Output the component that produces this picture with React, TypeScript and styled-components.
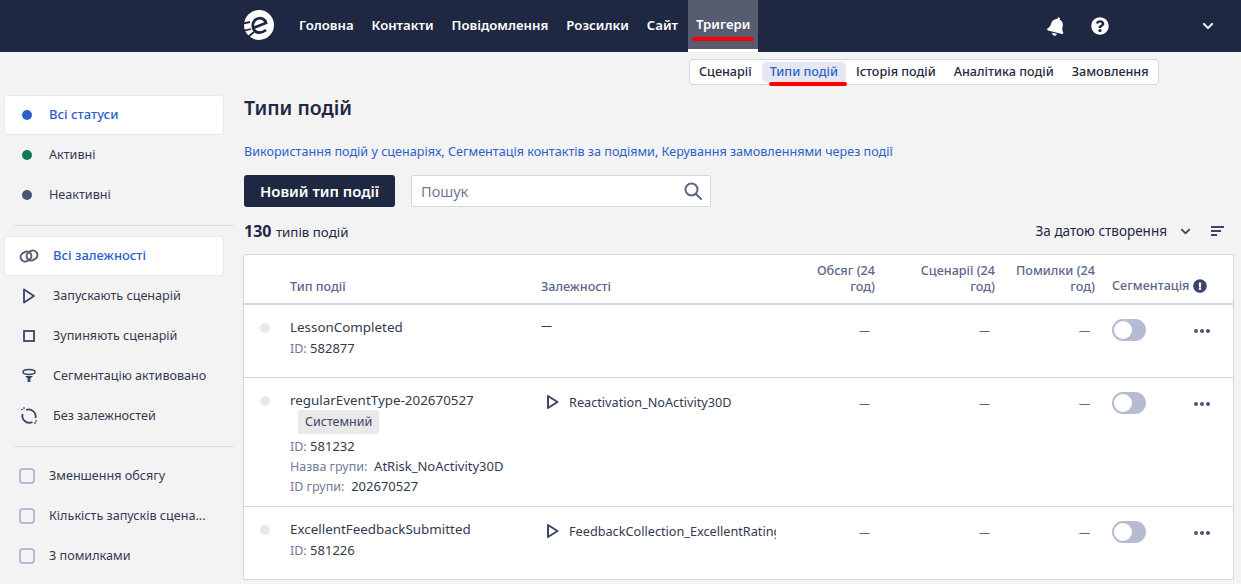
import React from 'react';
import styled, { createGlobalStyle } from 'styled-components';
import { FaBell, FaQuestionCircle, FaExclamationCircle, FaChevronDown } from 'react-icons/fa';

const GlobalStyle = createGlobalStyle`
  html, body {
    margin: 0;
    padding: 0;
    height: 584px;
    overflow: hidden;
    background: #f3f3f3;
    font-family: "Noto Sans", "Liberation Sans", sans-serif;
    color: #1f2842;
  }
  * { box-sizing: border-box; }
`;

const Header = styled.header`
  height: 52px;
  background: #1f2842;
  display: flex;
  align-items: stretch;
  padding-left: 243px;
`;

const Logo = styled.svg`
  width: 32px;
  height: 32px;
  margin-top: 9px;
  margin-right: 15px;
  flex: none;
`;

const TopNav = styled.nav`
  display: flex;
  align-items: stretch;
`;

const TopLink = styled.a<{ $active?: boolean }>`
  position: relative;
  display: flex;
  align-items: center;
  padding: 0 ${p => (p.$active ? 8 : 9)}px 2px;
  margin-left: ${p => (p.$active ? 1 : 0)}px;
  height: 52px;
  font-size: 13.2px;
  font-weight: 600;
  color: #fff;
  background: ${p => (p.$active ? '#575c70' : 'transparent')};
  border-bottom: ${p => (p.$active ? '3px solid #fff' : 'none')};
`;

const Redline = styled.span<{ $bottom: number; $left: number; $right: number }>`
  position: absolute;
  left: ${p => p.$left}px;
  right: ${p => p.$right}px;
  bottom: ${p => p.$bottom}px;
  height: 4px;
  border-radius: 2px;
  background: #fe0000;
`;

const HeaderIcons = styled.div`
  margin-left: auto;
  display: flex;
  align-items: center;
  color: #fff;
  padding-right: 27px;
`;

const IconSlot = styled.span<{ $w: number }>`
  display: flex;
  width: ${p => p.$w}px;
  align-items: center;
`;

const SubRow = styled.div`
  height: 26px;
  margin-top: 7px;
  padding-left: 689px;
`;

const SubNav = styled.div`
  display: inline-flex;
  align-items: center;
  gap: 2px;
  height: 26px;
  width: 470px;
  padding: 0 1px;
  background: #fff;
  border: 1px solid #d3d7e3;
  border-radius: 4px;
`;

const SubLink = styled.a<{ $active?: boolean }>`
  position: relative;
  display: flex;
  align-items: center;
  height: 20px;
  padding: 0 8px 1px;
  border-radius: 3px;
  font-size: 12.6px;
  font-weight: 500;
  white-space: nowrap;
  color: ${p => (p.$active ? '#2a62c9' : '#1f2842')};
  background: ${p => (p.$active ? '#e6e8f0' : 'transparent')};
`;

const Body = styled.div`
  display: flex;
  align-items: flex-start;
`;

const Sidebar = styled.aside`
  width: 243px;
  flex: none;
  padding: 10px 0 0 4px;
`;

const FilterItem = styled.div<{ $active?: boolean; $gap: number }>`
  width: 220px;
  height: 40px;
  display: flex;
  align-items: center;
  padding-left: 15px;
  gap: ${p => p.$gap}px;
  font-size: ${p => (p.$active ? 13 : 12.6)}px;
  white-space: nowrap;
  border-radius: 4px;
  color: ${p => (p.$active ? '#2a62c9' : '#333a50')};
  font-weight: ${p => (p.$active ? 500 : 400)};
  background: ${p => (p.$active ? '#fff' : 'transparent')};
  box-shadow: ${p => (p.$active ? 'inset 0 0 0 1px #e6e8f0' : 'none')};
`;

const FilterLabel = styled.span`
  margin-top: -2px;
`;

const Dot = styled.span<{ $color: string }>`
  width: 10px;
  height: 10px;
  margin-left: 3px;
  border-radius: 50%;
  background: ${p => p.$color};
  flex: none;
`;

const FilterIcon = styled.svg`
  width: 20px;
  height: 20px;
  flex: none;
`;

const Divider = styled.div<{ $after: number }>`
  width: 220px;
  height: 1px;
  margin: 10px 0 ${p => p.$after}px 10px;
  background: #dedfe5;
`;

const Check = styled.span`
  width: 16px;
  height: 16px;
  flex: none;
  border: 2px solid #b6bbd3;
  border-radius: 4px;
  background: #f3f3f3;
`;

const Main = styled.main`
  width: 991px;
  flex: none;
  padding-top: 9px;
`;

const Title = styled.h1`
  margin: 0;
  height: 27px;
  padding-left: 1px;
  font-size: 19.5px;
  line-height: 27px;
  font-weight: 600;
  color: #1f2842;
`;

const Links = styled.div`
  margin-top: 22px;
  padding-left: 1px;
  font-size: 12.6px;
  line-height: 18px;
  color: #2a62c9;
  white-space: nowrap;
`;

const Toolbar = styled.div`
  display: flex;
  gap: 16px;
  margin-top: 14px;
  padding-left: 1px;
`;

const PrimaryButton = styled.button`
  width: 151px;
  height: 32px;
  border: none;
  border-radius: 3px;
  background: #1f2842;
  color: #fff;
  font: 600 14.9px "Noto Sans", sans-serif;
`;

const Search = styled.div`
  width: 300px;
  height: 32px;
  display: flex;
  align-items: center;
  justify-content: space-between;
  padding: 0 7px 0 9px;
  background: #fff;
  border: 1px solid #d3d7e3;
  border-radius: 2px;
  font-size: 14.5px;
  color: #717a98;
`;

const CountRow = styled.div`
  display: flex;
  align-items: center;
  justify-content: space-between;
  height: 24px;
  margin-top: 12px;
  padding-left: 1px;
  font-size: 13.3px;
`;

const CountNumber = styled.b`
  font-size: 16px;
  font-weight: 700;
  margin-right: 1px;
`;

const SortBox = styled.div`
  display: flex;
  align-items: center;
  padding-right: 10px;
  color: #1f2842;
  font-size: 13.5px;
`;

const SortLabel = styled.span`
  margin-right: 13px;
`;

const SortChevron = styled.span`
  display: flex;
  color: #3b4568;
  margin-right: 20px;
`;

const Table = styled.div`
  margin-top: 11px;
  background: #fff;
  border: 1px solid #d3d7e3;
  border-bottom: none;
  border-radius: 4px 4px 0 0;
`;

const columns = '46px 251px 235px 99px 120px 100px 17px 1fr';

const HeaderRow = styled.div`
  display: grid;
  grid-template-columns: ${columns};
  height: 50px;
  border-bottom: 2px solid #d3d7e3;
  font-size: 12.6px;
  line-height: 16px;
  font-weight: 500;
  color: #5c658a;
`;

const HeadCell = styled.div<{ $right?: boolean; $col: number }>`
  grid-column: ${p => p.$col};
  align-self: end;
  padding-bottom: 8px;
  white-space: nowrap;
  text-align: ${p => (p.$right ? 'right' : 'left')};
`;

const SegHead = styled(HeadCell)`
  display: flex;
  align-items: center;
  gap: 4px;
  padding-bottom: 9px;
`;

const Row = styled.div<{ $h: number }>`
  display: grid;
  grid-template-columns: ${columns};
  height: ${p => p.$h}px;
  border-bottom: 1px solid #d3d7e3;
  font-size: 13px;
`;

const StatusDot = styled.span`
  width: 10px;
  height: 10px;
  margin: 18px 0 0 16px;
  border-radius: 50%;
  background: #e6e8ef;
`;

const NameCell = styled.div`
  padding-top: 12px;
  line-height: 20px;
`;

const EventName = styled.div`
  font-size: 13.4px;
  margin-bottom: 1px;
  color: #333a50;
`;

const Meta = styled.div`
  color: #333a50;
  white-space: nowrap;
`;

const MetaKey = styled.span`
  color: #717a98;
  font-size: 12.5px;
  line-height: 1;
`;

const Badge = styled.div`
  display: block;
  width: fit-content;
  margin: -1px 0 2px 8px;
  padding: 0 7px;
  height: 24px;
  font-size: 12.5px;
  line-height: 23px;
  border-radius: 2px;
  background: #e9e9ea;
  color: #3b4568;
`;

const DepCell = styled.div<{ $plain?: boolean }>`
  grid-column: 3;
  display: flex;
  align-items: flex-start;
  gap: 9px;
  padding-top: ${p => (p.$plain ? '11px' : '15px')};
  padding-left: ${p => (p.$plain ? '0' : '5px')};
  font-size: ${p => (p.$plain ? '11px' : '12.7px')};
  line-height: 18px;
  color: #333a50;
  overflow: hidden;
  white-space: nowrap;
`;

const Dash = styled.div`
  padding: 16px 5px 0 0;
  text-align: right;
  font-size: 11px;
  line-height: 18px;
  color: #5c658a;
`;

const ToggleCell = styled.div`
  grid-column: 8;
  display: flex;
  align-items: flex-start;
`;

const Toggle = styled.span`
  width: 34px;
  height: 22px;
  margin-top: 14px;
  padding: 2px;
  border-radius: 11px;
  background: #b6bbd3;
  flex: none;
`;

const Knob = styled.span`
  display: block;
  width: 18px;
  height: 18px;
  border-radius: 50%;
  background: #fff;
`;

const RowMenu = styled.span`
  display: flex;
  margin: 24px 0 0 48px;
`;

const Play = () => (
  <svg width="14" height="16" viewBox="0 0 14 16" fill="none" style={{ flex: 'none', marginTop: 1 }}>
    <path d="M2 2l9.5 6L2 14z" stroke="#3b4568" strokeWidth="2" strokeLinejoin="round" />
  </svg>
);

const Dots = () => (
  <svg width="16" height="4" viewBox="0 0 16 4" fill="#4a5478">
    <circle cx="2" cy="2" r="2" />
    <circle cx="8" cy="2" r="2" />
    <circle cx="14" cy="2" r="2" />
  </svg>
);

const events = [
  { name: 'LessonCompleted', id: '582877', h: 73, dep: '' },
  { name: 'regularEventType-202670527', id: '581232', h: 129, dep: 'Reactivation_NoActivity30D', group: 'AtRisk_NoActivity30D', groupId: '202670527' },
  { name: 'ExcellentFeedbackSubmitted', id: '581226', h: 73, dep: 'FeedbackCollection_ExcellentRating' },
];

export default function App() {
  return (
    <>
      <GlobalStyle />
      <Header>
        <Logo viewBox="0 0 32 32">
          <circle cx="16" cy="16" r="15" fill="#fff" />
          <path d="M11.5 18.5L23 14C22 10 18 8.5 15 9.5C10 11 9 16 10.5 20C12 24 18 25 23 21" fill="none" stroke="#1f2842" strokeWidth="2.8" />
          <path d="M0 14.5L7 13M0 22L8 20M5 28L11 23" stroke="#1f2842" strokeWidth="1.8" />
        </Logo>
        <TopNav>
          <TopLink>Головна</TopLink>
          <TopLink>Контакти</TopLink>
          <TopLink>Повідомлення</TopLink>
          <TopLink>Розсилки</TopLink>
          <TopLink>Сайт</TopLink>
          <TopLink $active>
            Тригери
            <Redline $bottom={8} $left={4} $right={4} />
          </TopLink>
        </TopNav>
        <HeaderIcons>
          <IconSlot $w={44}><FaBell size={19} style={{ transform: 'rotate(15deg)' }} /></IconSlot>
          <IconSlot $w={111}><FaQuestionCircle size={18} /></IconSlot>
          <FaChevronDown size={12} />
        </HeaderIcons>
      </Header>
      <SubRow>
        <SubNav>
          <SubLink>Сценарії</SubLink>
          <SubLink $active>
            Типи подій
            <Redline $bottom={-4} $left={7} $right={-1} />
          </SubLink>
          <SubLink>Історія подій</SubLink>
          <SubLink>Аналітика подій</SubLink>
          <SubLink>Замовлення</SubLink>
        </SubNav>
      </SubRow>
      <Body>
        <Sidebar>
          <FilterItem $active $gap={17}><Dot $color="#2a62c9" /><FilterLabel>Всі статуси</FilterLabel></FilterItem>
          <FilterItem $gap={17}><Dot $color="#127a5a" /><FilterLabel>Активні</FilterLabel></FilterItem>
          <FilterItem $gap={17}><Dot $color="#4a5478" /><FilterLabel>Неактивні</FilterLabel></FilterItem>
          <Divider $after={10} />
          <FilterItem $active $gap={14}>
            <FilterIcon viewBox="0 0 20 20" fill="none" stroke="#5a5f70" strokeWidth="2">
              <rect x="1.5" y="6" width="11" height="9" rx="4.5" transform="rotate(-30 7 10.5)" />
              <rect x="7.5" y="5" width="11" height="9" rx="4.5" transform="rotate(-30 13 9.5)" />
            </FilterIcon>
            <FilterLabel>Всі залежності</FilterLabel>
          </FilterItem>
          <FilterItem $gap={14}>
            <FilterIcon viewBox="0 0 20 20" fill="none" stroke="#3b4568" strokeWidth="1.8">
              <path d="M5 3.5l10 6.5-10 6.5z" strokeLinejoin="round" />
            </FilterIcon>
            <FilterLabel>Запускають сценарій</FilterLabel>
          </FilterItem>
          <FilterItem $gap={14}>
            <FilterIcon viewBox="0 0 20 20" fill="none" stroke="#3b4568" strokeWidth="1.8">
              <rect x="5" y="5" width="10" height="10" />
            </FilterIcon>
            <FilterLabel>Зупиняють сценарій</FilterLabel>
          </FilterItem>
          <FilterItem $gap={14}>
            <FilterIcon viewBox="0 0 20 20" fill="none" stroke="#3b4568" strokeWidth="1.5">
              <ellipse cx="10" cy="6" rx="6" ry="2.4" />
              <path d="M6 10h8l-2.6 2.6V16h-2.8v-3.4z" fill="#3b4568" stroke="none" />
            </FilterIcon>
            <FilterLabel>Сегментацію активовано</FilterLabel>
          </FilterItem>
          <FilterItem $gap={14}>
            <FilterIcon viewBox="0 0 20 20" fill="none" stroke="#3b4568" strokeWidth="1.8">
              <path d="M7 4A7 7 0 0 1 16.5 12" />
              <path d="M13.5 16A7 7 0 0 1 3.6 8" />
              <circle cx="3" cy="3.5" r=".6" fill="#3b4568" strokeWidth="0.6" />
              <circle cx="5" cy="2" r=".6" fill="#3b4568" strokeWidth="0.6" />
              <circle cx="17" cy="15" r=".6" fill="#3b4568" strokeWidth="0.6" />
              <circle cx="16" cy="17" r=".6" fill="#3b4568" strokeWidth="0.6" />
            </FilterIcon>
            <FilterLabel>Без залежностей</FilterLabel>
          </FilterItem>
          <Divider $after={9} />
          <FilterItem $gap={14}><Check /><FilterLabel>Зменшення обсягу</FilterLabel></FilterItem>
          <FilterItem $gap={14}><Check /><FilterLabel>Кількість запусків сцена...</FilterLabel></FilterItem>
          <FilterItem $gap={14}><Check /><FilterLabel>З помилками</FilterLabel></FilterItem>
        </Sidebar>
        <Main>
          <Title>Типи подій</Title>
          <Links>Використання подій у сценаріях, Сегментація контактів за подіями, Керування замовленнями через події</Links>
          <Toolbar>
            <PrimaryButton>Новий тип події</PrimaryButton>
            <Search>
              Пошук
              <svg width="20" height="20" viewBox="0 0 20 20" fill="none" stroke="#5c658a" strokeWidth="2">
                <circle cx="8.5" cy="8.5" r="6" />
                <path d="M13 13l5 5" strokeLinecap="round" />
              </svg>
            </Search>
          </Toolbar>
          <CountRow>
            <span><CountNumber>130</CountNumber> типів подій</span>
            <SortBox>
              <SortLabel>За датою створення</SortLabel>
              <SortChevron><FaChevronDown size={11} /></SortChevron>
              <svg width="13" height="12" viewBox="0 0 13 12" fill="#3b4568">
                <rect x="0" y="1" width="13" height="2" />
                <rect x="0" y="5" width="10" height="2" />
                <rect x="0" y="9" width="6" height="2" />
              </svg>
            </SortBox>
          </CountRow>
          <Table>
            <HeaderRow>
              <HeadCell $col={2}>Тип події</HeadCell>
              <HeadCell $col={3}>Залежності</HeadCell>
              <HeadCell $col={4} $right>Обсяг (24<br />год)</HeadCell>
              <HeadCell $col={5} $right>Сценарії (24<br />год)</HeadCell>
              <HeadCell $col={6} $right>Помилки (24<br />год)</HeadCell>
              <SegHead $col={8}>Сегментація <FaExclamationCircle size={14} color="#3b4568" /></SegHead>
            </HeaderRow>
            {events.map(ev => (
              <Row key={ev.id} $h={ev.h}>
                <StatusDot />
                <NameCell>
                  <EventName>{ev.name}</EventName>
                  {ev.group && <Badge>Системний</Badge>}
                  <Meta><MetaKey>ID:</MetaKey> {ev.id}</Meta>
                  {ev.group && <Meta><MetaKey>Назва групи:</MetaKey>&nbsp; {ev.group}</Meta>}
                  {ev.group && <Meta><MetaKey>ID групи:</MetaKey>&nbsp; {ev.groupId}</Meta>}
                </NameCell>
                <DepCell $plain={!ev.dep}>
                  {ev.dep ? <><Play />{ev.dep}</> : '—'}
                </DepCell>
                <Dash>—</Dash>
                <Dash>—</Dash>
                <Dash>—</Dash>
                <ToggleCell>
                  <Toggle><Knob /></Toggle>
                  <RowMenu><Dots /></RowMenu>
                </ToggleCell>
              </Row>
            ))}
          </Table>
        </Main>
      </Body>
    </>
  );
}
